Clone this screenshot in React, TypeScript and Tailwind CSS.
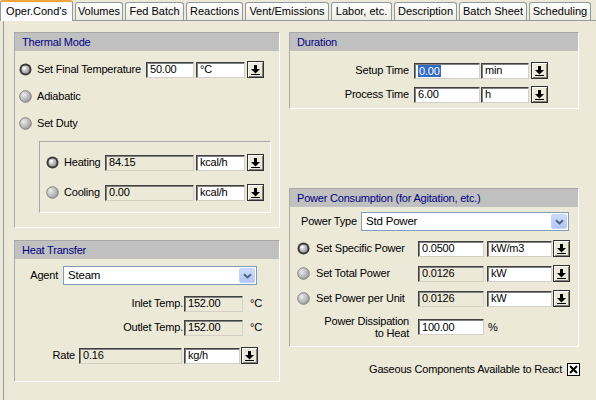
import React from "react";

const TABS = [
  { label: "Oper.Cond's", w: "w-[73px]", active: true },
  { label: "Volumes", w: "w-[48px]" },
  { label: "Fed Batch", w: "w-[59px]" },
  { label: "Reactions", w: "w-[57px]" },
  { label: "Vent/Emissions", w: "w-[84px]" },
  { label: "Labor, etc.", w: "w-[61px]" },
  { label: "Description", w: "w-[63px]" },
  { label: "Batch Sheet", w: "w-[68px]" },
  { label: "Scheduling", w: "w-[62px]" },
];

function Radio({ checked }: { checked?: boolean }) {
  return (
    <svg width="13" height="13" viewBox="0 0 13 13" className="shrink-0">
      <defs>
        <radialGradient id="rg" cx="0.35" cy="0.35" r="0.75">
          <stop offset="0" stopColor="#ececec" />
          <stop offset="1" stopColor="#949494" />
        </radialGradient>
      </defs>
      {checked ? (
        <>
          <circle cx="6.5" cy="6.5" r="6" fill="#3a3a3a" />
          <circle cx="6.5" cy="6.5" r="4" fill="url(#rg)" />
          <circle cx="5.2" cy="5.2" r="1.3" fill="#fff" />
        </>
      ) : (
        <circle cx="6.5" cy="6.5" r="5.8" fill="url(#rg)" stroke="#7a7a7a" strokeWidth="0.9" />
      )}
    </svg>
  );
}

function Edit({ w, value, ro, sel }: { w: string; value: string; ro?: boolean; sel?: boolean }) {
  return (
    <div
      className={`${w} h-[16px] shrink-0 flex items-center pl-[3px] border border-t-[#404040] border-l-[#404040] border-b-[#d4d0c8] border-r-[#d4d0c8] shadow-[inset_1px_1px_0_#808080] ${
        ro ? "bg-[#ece9d8]" : "bg-white"
      }`}
    >
      {sel ? <span className="bg-[#316ac5] text-white leading-[12px] px-[1px]">{value}</span> : <span>{value}</span>}
    </div>
  );
}

function DropBtn() {
  return (
    <div className="w-[17px] h-[17px] shrink-0 bg-[#ece9d8] border border-[#303030] shadow-[inset_1px_1px_0_#fff,inset_-1px_-1px_0_#808080] flex items-center justify-center">
      <svg width="9" height="10" viewBox="0 0 9 10">
        <rect x="3" y="0" width="3" height="4" fill="#000" />
        <path d="M0 4h9L4.5 8.5z" fill="#000" />
        <rect x="0" y="9" width="9" height="1" fill="#000" />
      </svg>
    </div>
  );
}

function Combo({ w, value }: { w: string; value: string }) {
  return (
    <div className={`${w} h-[19px] shrink-0 border border-[#7f9db9] bg-white flex items-center`}>
      <span className="flex-1 pl-[4px] text-[11.5px]">{value}</span>
      <div className="w-[16px] h-[15px] mr-[1px] rounded-[2px] bg-linear-to-b from-[#cddcfd] to-[#b2c6f4] border border-[#c3d3fd] flex items-center justify-center">
        <svg width="9" height="6" viewBox="0 0 9 6">
          <path d="M1 1.2 L4.5 4.5 L8 1.2" stroke="#4d6185" strokeWidth="2" fill="none" />
        </svg>
      </div>
    </div>
  );
}

function Group({ title, className, children }: { title: string; className: string; children: React.ReactNode }) {
  return (
    <div className={`border border-t-[#a8a8a8] border-l-[#a8a8a8] border-r-white border-b-white flex flex-col ${className}`}>
      <div className="h-[18px] shrink-0 bg-[#c0c0c0] pl-[7px] leading-[18px] text-[#000080]">{title}</div>
      {children}
    </div>
  );
}

export default function App() {
  return (
    <div className="w-[596px] h-[400px] overflow-hidden bg-[#ece9d8] text-[11px] tracking-[-0.2px] text-black font-['Liberation_Sans',Arial,sans-serif] flex flex-col">
      {/* Tabs */}
      <div className="h-[21px] flex items-start gap-[2px] relative z-10">
        {TABS.map((t) =>
          t.active ? (
            <div
              key={t.label}
              className={`${t.w} h-[21px] bg-[#fcfcfe] border-x border-[#919b9c] rounded-t-[3px] border-t-[2px] border-t-[#f3a53a] flex items-center justify-center pb-[1px] text-[11px] tracking-normal`}
            >
              {t.label}
            </div>
          ) : (
            <div
              key={t.label}
              className={`${t.w} h-[18px] mt-[2px] bg-linear-to-b from-white to-[#ecebe4] border border-b-0 border-[#919b9c] rounded-t-[3px] flex items-center justify-center text-[11px] tracking-normal`}
            >
              {t.label}
            </div>
          )
        )}
      </div>

      {/* Panel */}
      <div className="flex-1 -mt-[1px] ml-[3px] border-l border-t border-[#919b9c] pt-[11px] pl-[10px] flex">
        {/* Left column */}
        <div className="w-[266px] flex flex-col">
          <Group title="Thermal Mode" className="h-[196px]">
            <div className="flex flex-col gap-[10px] mt-[10px] pl-[4px]">
              <div className="h-[17px] flex items-center">
                <Radio checked />
                <span className="ml-[5px] w-[109px]">Set Final Temperature</span>
                <Edit w="w-[48px]" value="50.00" />
                <div className="ml-[2px]">
                  <Edit w="w-[49px]" value="°C" />
                </div>
                <div className="ml-[2px]">
                  <DropBtn />
                </div>
              </div>
              <div className="h-[17px] flex items-center">
                <Radio />
                <span className="ml-[5px]">Adiabatic</span>
              </div>
              <div className="h-[17px] flex items-center">
                <Radio />
                <span className="ml-[5px]">Set Duty</span>
              </div>
            </div>
            <div className="mt-[9px] ml-[24px] w-[232px] border border-t-[#a8a8a8] border-l-[#a8a8a8] border-r-white border-b-white pt-[12px] pb-[11px] pl-[6px] flex flex-col gap-[13px]">
              {[
                { l: "Heating", v: "84.15", c: true },
                { l: "Cooling", v: "0.00", c: false },
              ].map((r) => (
                <div key={r.l} className="h-[17px] flex items-center">
                  <Radio checked={r.c} />
                  <span className="ml-[5px] w-[41px]">{r.l}</span>
                  <Edit w="w-[89px]" value={r.v} ro />
                  <div className="ml-[2px]">
                    <Edit w="w-[49px]" value="kcal/h" />
                  </div>
                  <div className="ml-[2px]">
                    <DropBtn />
                  </div>
                </div>
              ))}
            </div>
          </Group>

          <Group title="Heat Transfer" className="h-[142px] mt-[12px]">
            <div className="mt-[7px] h-[19px] flex items-center">
              <span className="w-[48px] text-right pr-[5px]">Agent</span>
              <Combo w="w-[194px]" value="Steam" />
            </div>
            <div className="mt-[10px] h-[17px] flex items-center">
              <span className="w-[169px] text-right pr-[1px]">Inlet Temp.</span>
              <Edit w="w-[59px]" value="152.00" ro />
              <span className="ml-[7px]">°C</span>
            </div>
            <div className="mt-[7px] h-[17px] flex items-center">
              <span className="w-[169px] text-right pr-[1px]">Outlet Temp.</span>
              <Edit w="w-[59px]" value="152.00" ro />
              <span className="ml-[7px]">°C</span>
            </div>
            <div className="mt-[11px] h-[17px] flex items-center">
              <span className="w-[64px] text-right pr-[4px]">Rate</span>
              <Edit w="w-[103px]" value="0.16" ro />
              <div className="ml-[2px]">
                <Edit w="w-[56px]" value="kg/h" />
              </div>
              <div className="ml-[1px]">
                <DropBtn />
              </div>
            </div>
          </Group>
        </div>

        {/* Right column */}
        <div className="w-[290px] ml-[9px] flex flex-col">
          <Group title="Duration" className="h-[77px]">
            <div className="flex flex-col gap-[7px] mt-[11px]">
              {[
                { l: "Setup Time", v: "0.00", u: "min", s: true },
                { l: "Process Time", v: "6.00", u: "h", s: false },
              ].map((r) => (
                <div key={r.l} className="h-[17px] flex items-center">
                  <span className="w-[124px] text-right pr-[5px]">{r.l}</span>
                  <Edit w="w-[66px]" value={r.v} sel={r.s} />
                  <div className="ml-[1px]">
                    <Edit w="w-[48px]" value={r.u} />
                  </div>
                  <div className="ml-[2px]">
                    <DropBtn />
                  </div>
                </div>
              ))}
            </div>
          </Group>

          <Group title="Power Consumption (for Agitation, etc.)" className="h-[159px] mt-[79px]">
            <div className="mt-[5px] h-[19px] flex items-center">
              <span className="w-[71px] pl-[11px]">Power Type</span>
              <Combo w="w-[208px]" value="Std Power" />
            </div>
            <div className="flex flex-col gap-[8px] mt-[9px] pl-[7px]">
              {[
                { l: "Set Specific Power", v: "0.0500", u: "kW/m3", c: true },
                { l: "Set Total Power", v: "0.0126", u: "kW", c: false },
                { l: "Set Power per Unit", v: "0.0126", u: "kW", c: false },
              ].map((r) => (
                <div key={r.l} className="h-[17px] flex items-center">
                  <Radio checked={r.c} />
                  <span className="ml-[6px] w-[102px]">{r.l}</span>
                  <Edit w="w-[66px]" value={r.v} ro={!r.c} />
                  <div className="ml-[3px]">
                    <Edit w="w-[65px]" value={r.u} />
                  </div>
                  <div className="ml-[1px]">
                    <DropBtn />
                  </div>
                </div>
              ))}
            </div>
            <div className="mt-[7px] h-[26px] flex items-center">
              <span className="w-[128px] text-right pr-[9px] leading-[12px]">
                Power Dissipation
                <br />
                to Heat
              </span>
              <Edit w="w-[66px]" value="100.00" />
              <span className="ml-[4px]">%</span>
            </div>
          </Group>

          <div className="mt-[16px] h-[13px] flex items-center justify-end -mr-[1px]">
            <span className="mr-[5px]">Gaseous Components Available to React</span>
            <div className="w-[13px] h-[13px] bg-white border border-black flex items-center justify-center">
              <svg width="9" height="9" viewBox="0 0 9 9">
                <path d="M1 1L8 8M8 1L1 8" stroke="#000" strokeWidth="2" />
              </svg>
            </div>
          </div>
        </div>
      </div>
    </div>
  );
}
